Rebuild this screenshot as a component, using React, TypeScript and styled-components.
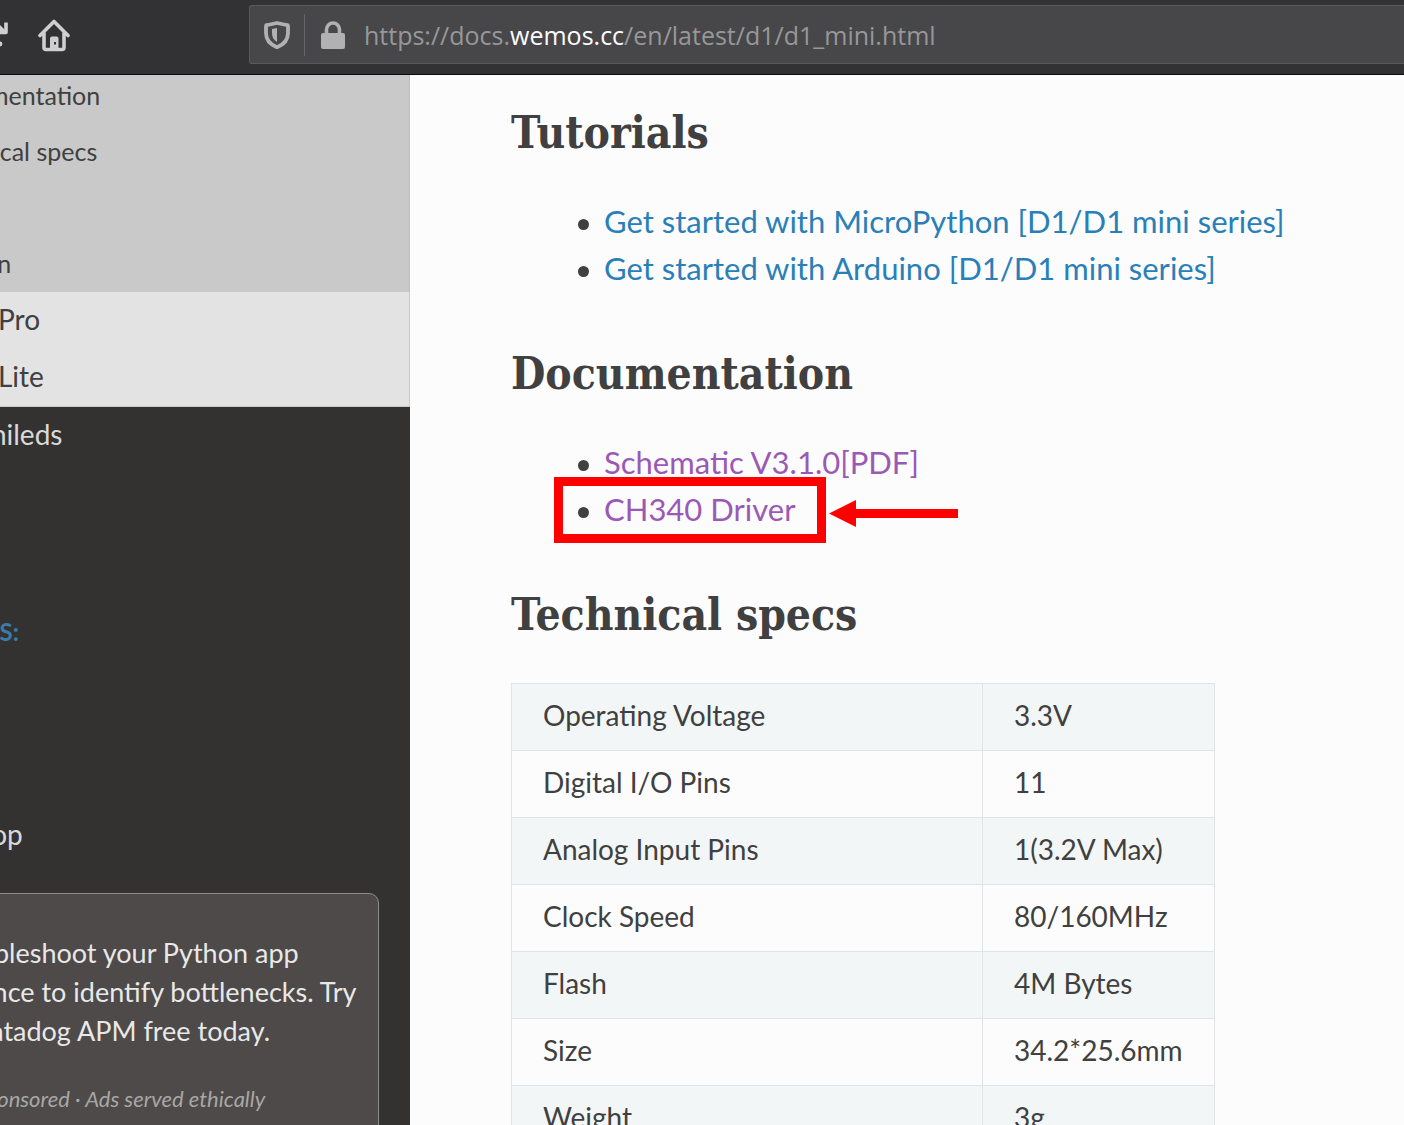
import React from "react";
import styled, { createGlobalStyle } from "styled-components";

const bodyFont = `Lato, "Liberation Sans", sans-serif`;
const slabFont = `"Roboto Slab", "DejaVu Serif Condensed", "DejaVu Serif", serif`;
const chromeFont = `"Open Sans", "Noto Sans", sans-serif`;

const GlobalStyle = createGlobalStyle`
  *, *::before, *::after { box-sizing: border-box; }
  html, body, #root { height: 100%; }
  body {
    margin: 0;
    background: #fcfcfc;
    color: #404040;
    font-family: ${bodyFont};
    overflow: hidden;
  }
`;

const Window = styled.div`
  display: flex;
  flex-direction: column;
  height: 100vh;
  overflow: hidden;
`;

/* Browser toolbar */
const Toolbar = styled.header`
  display: flex;
  align-items: flex-start;
  flex: none;
  height: 75px;
  padding-top: 5px;
  background: #323234;
  border-bottom: 1px solid #0c0c0d;
`;

const ToolButtons = styled.div`
  display: flex;
  align-items: center;
  gap: 29px;
  width: 249px;
  height: 60px;
`;

const ToolButton = styled.button`
  display: flex;
  padding: 0;
  border: 0;
  background: none;
  color: #cfcfd0;
`;

const AddressBar = styled.div`
  display: flex;
  align-items: center;
  flex: 1;
  height: 59px;
  padding-left: 14px;
  background: #474749;
  border: 1px solid #5a5a5d;
  border-right: 0;
  border-radius: 3px 0 0 3px;
`;

const Divider = styled.span`
  width: 1px;
  height: 42px;
  margin: 0 15px 0 14px;
  background: #66666a;
`;

const Url = styled.span`
  margin-left: 18px;
  color: #97979a;
  font: 25px/36px ${chromeFont};
  white-space: nowrap;
`;

const Domain = styled.span`
  color: #fbfbfe;
`;

/* Page */
const Page = styled.div`
  display: flex;
  flex: 1;
  min-height: 0;
  overflow: hidden;
`;

const Sidebar = styled.aside`
  flex: none;
  width: 581px;
  margin-left: -171px;
  background: #343131;
  overflow: hidden;
`;

const List = styled.ul`
  margin: 0;
  padding: 0;
  list-style: none;
`;

const SectionList = styled(List)`
  display: grid;
  grid-auto-rows: 56px;
  height: 217px;
  align-content: end;
  background: #c9c9c9;
  border-right: 1px solid #bdbdbd;
`;

const SectionItem = styled.li<{ $row: number }>`
  grid-row: ${(p) => p.$row};
`;

const BoardList = styled(List)`
  background: #e3e3e3;
  border-right: 1px solid #c9c9c9;
  border-bottom: 1px solid #c9c9c9;
`;

const NavLink = styled.a<{ $level: 1 | 2 | 3 }>`
  display: block;
  padding: 0 0 2px ${(p) => ({ 1: 43, 2: 65, 3: 100 })[p.$level]}px;
  color: ${(p) => (p.$level === 1 ? "#d9d9d9" : "#404040")};
  font-size: ${(p) => (p.$level === 3 ? 25 : 28)}px;
  line-height: ${(p) => (p.$level === 3 ? 54 : 55)}px;
  text-decoration: none;
  white-space: nowrap;
`;

const Caption = styled.p`
  margin: 144px 0 151px;
  padding-left: 46px;
  color: #3a7ca8;
  font-size: 24px;
  font-weight: 700;
  line-height: 48px;
`;

const Sponsor = styled.section`
  margin: 29px 31px 0 32px;
  padding: 39px 20px;
  background: #4d4a49;
  border: 1px solid #8e8c8b;
  border-radius: 10px;
  text-align: center;
`;

const SponsorLink = styled.a`
  display: block;
  color: #e8e8e8;
  font-size: 27px;
  line-height: 39px;
  text-decoration: none;
  white-space: nowrap;
`;

const SponsorNote = styled.p`
  margin: 31px 0 0;
  color: #a9a7a6;
  font-size: 22px;
  font-style: italic;
  line-height: 36px;
`;

const Content = styled.main`
  flex: 1;
  min-width: 0;
  padding: 28px 0 0 101px;
  background: #fcfcfc;
  overflow: hidden;
`;

const Heading = styled.h2`
  margin: 0 0 35px;
  font: 700 44px/60px ${slabFont};
`;

const LinkList = styled(List)`
  margin-bottom: 52px;
  padding-left: 67px;
`;

const LinkItem = styled.li`
  position: relative;
  display: flex;
  align-items: center;
  font-size: 31px;
  line-height: 47px;
  white-space: nowrap;

  &::before {
    content: "";
    width: 11px;
    height: 11px;
    margin: 5px 15px 0 0;
    border-radius: 50%;
    background: #404040;
  }
`;

const TextLink = styled.a<{ $visited?: boolean }>`
  color: ${(p) => (p.$visited ? "#9b59b6" : "#2980b9")};
  text-decoration: none;
`;

const Callout = styled.span`
  position: absolute;
  top: -9px;
  left: -24px;
  width: 272px;
  height: 66px;
  border: 9px solid #ff0000;
`;

const CalloutArrow = styled.svg`
  position: absolute;
  top: 14px;
  left: 251px;
`;

const SpecTable = styled.table`
  margin-top: 38px;
  border-collapse: collapse;
  font-size: 28px;
  line-height: 34px;
`;

const SpecRow = styled.tr`
  height: 67px;
  &:nth-child(odd) {
    background: #f3f6f6;
  }
`;

const SpecCell = styled.td`
  padding: 14px 31px 18px;
  border: 1px solid #e1e4e5;
  white-space: nowrap;

  &:first-child {
    min-width: 471px;
  }
`;

const ReloadIcon = () => (
  <svg width="9" height="30" viewBox="0 0 9 30" aria-hidden="true">
    <path d="M6 2.500v10H-4" fill="none" stroke="currentColor" strokeWidth="3.6" strokeLinejoin="round" />
    <path d="M-2 3L6 11v3H-2z" fill="currentColor" />
    <circle cx="0" cy="24" r="2.4" fill="currentColor" />
  </svg>
);

const HomeIcon = () => (
  <svg width="32" height="33" viewBox="0 0 32 33" aria-hidden="true">
    <path
      d="M2 16.500L16 2.500l14 14M6 14v14.500a2 2 0 0 0 2 2h16a2 2 0 0 0 2-2V14"
      fill="none"
      stroke="currentColor"
      strokeWidth="3.6"
      strokeLinecap="round"
      strokeLinejoin="round"
    />
    <path d="M12 31V19.500a2 2 0 0 1 2-2h4.500a2 2 0 0 1 2 2V31z" fill="currentColor" />
    <rect x="16" y="23" width="2" height="2.500" fill="#323234" />
  </svg>
);

const ShieldIcon = () => (
  <svg width="26" height="28" viewBox="0 0 26 28" aria-hidden="true">
    <path
      d="M13 2L22.500 4a1.500 1.500 0 0 1 1.500 1.500V12c0 7-4 11.500-11 14.300C6 23.500 2 19 2 12V5.500A1.500 1.500 0 0 1 3.500 4z"
      fill="none"
      stroke="#b1b1b3"
      strokeWidth="3.8"
      strokeLinejoin="round"
    />
    <path d="M13 7v14c-3.500-2-5-5-5-9V8z" fill="#b1b1b3" />
  </svg>
);

const LockIcon = () => (
  <svg width="26" height="28" viewBox="0 0 26 28" aria-hidden="true">
    <path d="M6.500 13V8.500a6.500 6.500 0 0 1 13 0V13" fill="none" stroke="#b1b1b3" strokeWidth="3.6" />
    <rect x="1" y="12" width="24" height="16" rx="2" fill="#b1b1b3" />
  </svg>
);

const specs: [string, string][] = [
  ["Operating Voltage", "3.3V"],
  ["Digital I/O Pins", "11"],
  ["Analog Input Pins", "1(3.2V Max)"],
  ["Clock Speed", "80/160MHz"],
  ["Flash", "4M Bytes"],
  ["Size", "34.2*25.6mm"],
  ["Weight", "3g"],
];

const sections = [
  { label: "Documentation", row: 1 },
  { label: "Technical specs", row: 2 },
  { label: "Version", row: 4 },
];

export default function App() {
  return (
    <Window>
      <GlobalStyle />
      <Toolbar>
        <ToolButtons>
          <ToolButton aria-label="Reload">
            <ReloadIcon />
          </ToolButton>
          <ToolButton aria-label="Home">
            <HomeIcon />
          </ToolButton>
        </ToolButtons>
        <AddressBar>
          <ShieldIcon />
          <Divider />
          <LockIcon />
          <Url role="textbox" aria-label="Address">
            https://docs.<Domain>wemos.cc</Domain>/en/latest/d1/d1_mini.html
          </Url>
        </AddressBar>
      </Toolbar>
      <Page>
        <Sidebar>
          <nav>
            <SectionList>
              {sections.map((s) => (
                <SectionItem key={s.label} $row={s.row}>
                  <NavLink $level={3} href="#">{s.label}</NavLink>
                </SectionItem>
              ))}
            </SectionList>
            <BoardList>
              <li><NavLink $level={2} href="#">D1 mini Pro</NavLink></li>
              <li><NavLink $level={2} href="#">D1 mini Lite</NavLink></li>
            </BoardList>
            <NavLink $level={1} href="#">D1 mini Shileds</NavLink>
            <Caption>RESOURCES:</Caption>
            <NavLink $level={1} href="#">Online Shop</NavLink>
          </nav>
          <Sponsor>
            <SponsorLink href="#">
              Troubleshoot your Python app
              <br />
              performance to identify bottlenecks. Try
              <br />
              Datadog APM free today.
            </SponsorLink>
            <SponsorNote>Sponsored · Ads served ethically</SponsorNote>
          </Sponsor>
        </Sidebar>
        <Content>
          <Heading>Tutorials</Heading>
          <LinkList>
            <LinkItem>
              <TextLink href="#">Get started with MicroPython [D1/D1 mini series]</TextLink>
            </LinkItem>
            <LinkItem>
              <TextLink href="#">Get started with Arduino [D1/D1 mini series]</TextLink>
            </LinkItem>
          </LinkList>
          <Heading>Documentation</Heading>
          <LinkList>
            <LinkItem>
              <TextLink $visited href="#">Schematic V3.1.0[PDF]</TextLink>
            </LinkItem>
            <LinkItem>
              <TextLink $visited href="#">CH340 Driver</TextLink>
              <Callout />
              <CalloutArrow width="129" height="27" viewBox="0 0 129 27" aria-hidden="true">
                <path d="M0 13.500L27 0v9h102v9H27v9z" fill="#ff0000" />
              </CalloutArrow>
            </LinkItem>
          </LinkList>
          <Heading>Technical specs</Heading>
          <SpecTable>
            <tbody>
              {specs.map(([name, value]) => (
                <SpecRow key={name}>
                  <SpecCell>{name}</SpecCell>
                  <SpecCell>{value}</SpecCell>
                </SpecRow>
              ))}
            </tbody>
          </SpecTable>
        </Content>
      </Page>
    </Window>
  );
}
